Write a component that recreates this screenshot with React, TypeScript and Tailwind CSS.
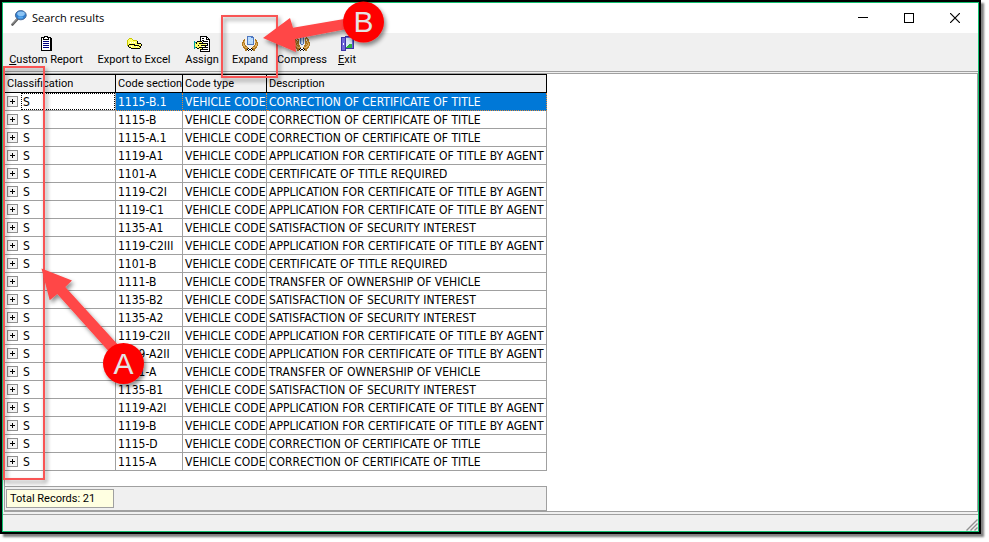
import { Fragment } from "react";
import type { ReactNode } from "react";

const ROWS = [
  { cls: "S", section: "1115-B.1", desc: "CORRECTION OF CERTIFICATE OF TITLE" },
  { cls: "S", section: "1115-B", desc: "CORRECTION OF CERTIFICATE OF TITLE" },
  { cls: "S", section: "1115-A.1", desc: "CORRECTION OF CERTIFICATE OF TITLE" },
  { cls: "S", section: "1119-A1", desc: "APPLICATION FOR CERTIFICATE OF TITLE BY AGENT" },
  { cls: "S", section: "1101-A", desc: "CERTIFICATE OF TITLE REQUIRED" },
  { cls: "S", section: "1119-C2I", desc: "APPLICATION FOR CERTIFICATE OF TITLE BY AGENT" },
  { cls: "S", section: "1119-C1", desc: "APPLICATION FOR CERTIFICATE OF TITLE BY AGENT" },
  { cls: "S", section: "1135-A1", desc: "SATISFACTION OF SECURITY INTEREST" },
  { cls: "S", section: "1119-C2III", desc: "APPLICATION FOR CERTIFICATE OF TITLE BY AGENT" },
  { cls: "S", section: "1101-B", desc: "CERTIFICATE OF TITLE REQUIRED" },
  { cls: "", section: "1111-B", desc: "TRANSFER OF OWNERSHIP OF VEHICLE" },
  { cls: "S", section: "1135-B2", desc: "SATISFACTION OF SECURITY INTEREST" },
  { cls: "S", section: "1135-A2", desc: "SATISFACTION OF SECURITY INTEREST" },
  { cls: "S", section: "1119-C2II", desc: "APPLICATION FOR CERTIFICATE OF TITLE BY AGENT" },
  { cls: "S", section: "1119-A2II", desc: "APPLICATION FOR CERTIFICATE OF TITLE BY AGENT" },
  { cls: "S", section: "1111-A", desc: "TRANSFER OF OWNERSHIP OF VEHICLE" },
  { cls: "S", section: "1135-B1", desc: "SATISFACTION OF SECURITY INTEREST" },
  { cls: "S", section: "1119-A2I", desc: "APPLICATION FOR CERTIFICATE OF TITLE BY AGENT" },
  { cls: "S", section: "1119-B", desc: "APPLICATION FOR CERTIFICATE OF TITLE BY AGENT" },
  { cls: "S", section: "1115-D", desc: "CORRECTION OF CERTIFICATE OF TITLE" },
  { cls: "S", section: "1115-A", desc: "CORRECTION OF CERTIFICATE OF TITLE" },
];

const COLORS: Record<string, string> = {
  k: "#000000",
  n: "#000080",
  w: "#ffffff",
  y: "#ffff66",
  o: "#c8c800",
  g: "#808080",
  t: "#00a0a0",
  b: "#b07820",
  l: "#e0b060",
  c: "#b8dcff",
  d: "#5078c0",
  p: "#3c34a8",
  v: "#7068d8",
  e: "#30b040",
  s: "#d8e8f8",
};

const CLIPBOARD = [
  "......kkkk......",
  "...kkkkwwkkkk...",
  "...kwkwwwwkwkk..",
  "...kwkkkkkkwkk..",
  "...kwwwwwwwwkk..",
  "...kwnnnnnnwkk..",
  "...kwwwwwwwwkk..",
  "...kwnnnnnnwkk..",
  "...kwwwwwwwwkk..",
  "...kwnnnnnnwkk..",
  "...kwwwwwwwwkk..",
  "...kwnnnnnnwkk..",
  "...kwwwwwwwwkk..",
  "...kwwwwwwwwkk..",
  "...kkkkkkkkkkk..",
  "................",
];

const FOLDER = [
  "................",
  "................",
  "...ooo..........",
  "..oyyyo.........",
  ".oyyyyyoooo.....",
  ".oyyyyyyyyyk....",
  ".oyywywywyyk....",
  ".oyyyyyyyyykkkk.",
  ".oykkkkkkyyyyyyk",
  ".okyyyyykkkkkyyk",
  "..kyywyyyywyykk.",
  "...kkyyyyyyyyyk.",
  ".....kkkkkkkkk..",
  "................",
  "................",
  "................",
];

const ASSIGN = [
  "......kkkkkkk...",
  "......kwwwwwkk..",
  "......kwkkwwkwk.",
  "......kwwwwwkkkk",
  "......kwkkwwwwwk",
  "t..kkkkkwkkkkkwk",
  "ttkyyyyykwwwwwwk",
  "tykyykkkkkkkkkwk",
  "tyyyyyyyyyyywkwk",
  "tyyykyykkkkkkkwk",
  "tyyyyyyywwykwwwk",
  "ttkyykkkkkkkkkwk",
  "t..kkyyykwwwwwwk",
  "......kkkkkkkkwk",
  "......kwwwwwwwwk",
  "......kkkkkkkkkk",
];

const EXPAND = [
  ".....dddddd.....",
  ".....dcccddd....",
  ".....dcccccd....",
  "..b..dcccccd.b..",
  ".bb..dcsccsd.bb.",
  ".bl..dcccccd.lb.",
  "bbl..dcccccd.lbb",
  "blb..dcccccd.blb",
  "blb..ddddddd.blb",
  "bllb........bllb",
  ".blbb......bblb.",
  ".bbllb....bllbb.",
  "..bbbbkwwkbbbb..",
  "...bbkwkkwkbb...",
  "...bb.k..k.bb...",
  "................",
];

const COMPRESS = [
  ".......ddd......",
  "..b...dccd..b...",
  "..bb..dcsd.bbb..",
  ".b.bb.dcsd.b.bb.",
  ".bb.b.dcsd.b.bb.",
  ".blbb.dcsd.bblb.",
  "bblbb.dcsd.bblbb",
  "blbbb.dcsd.bbblb",
  "blblb..dd..blblb",
  "bllbbb....bbbllb",
  ".bllbb....bbllb.",
  ".bblllb..blllbb.",
  "..bbbbkwwkbbbb..",
  "...bbkwkkwkbb...",
  "...bb.k..k.bb...",
  "................",
];

const EXIT = [
  "......ppppppppp.",
  "..pppppvvvvvvvp.",
  "..pvvvpssssssvp.",
  "..pvvvpssssssvp.",
  "..pvvvpssssssvp.",
  "..pvvvpssssssvp.",
  "..pvvvpssssssvp.",
  "..pvwvpssssssvp.",
  "..pvwvpssseeevp.",
  "..pvvvpsseeeevp.",
  "..pvvvpseeeeevp.",
  "..pvvvpeeeeeevp.",
  "..pvvvppppppppp.",
  "..pvvvp.........",
  "..ppppp.........",
  "................",
];

function PixelIcon({ map }: { map: string[] }) {
  return (
    <svg width="16" height="16" viewBox="0 0 16 16" shapeRendering="crispEdges" aria-hidden="true">
      {map.map((line, y) => (
        <Fragment key={y}>
          {line.split("").map((c, x) =>
            c === "." ? null : <rect key={x} x={x} y={y} width="1" height="1" fill={COLORS[c]} />
          )}
        </Fragment>
      ))}
    </svg>
  );
}

function SearchIcon() {
  return (
    <svg width="16" height="16" viewBox="0 0 16 16" aria-hidden="true">
      <path d="M1.5 14.5 L6.5 9" stroke="#5a5a5a" strokeWidth="2.6" strokeLinecap="round" />
      <path d="M1.5 14 L6 9.2" stroke="#a8a8a8" strokeWidth="0.9" strokeLinecap="round" />
      <ellipse cx="9.8" cy="5.2" rx="5.4" ry="4.6" fill="#2f7fd0" stroke="#4a6a98" strokeWidth="1" />
      <ellipse cx="10" cy="3.8" rx="3.8" ry="2.3" fill="#8cc4f4" />
      <ellipse cx="9.6" cy="7.4" rx="2.6" ry="1.2" fill="#58a8ec" />
    </svg>
  );
}

function ToolButton({ className, map, children }: { className: string; map: string[]; children: ReactNode }) {
  return (
    <button type="button" className={`flex shrink-0 flex-col items-center whitespace-nowrap ${className}`}>
      <PixelIcon map={map} />
      <span className="leading-4">{children}</span>
    </button>
  );
}

function TitleBar() {
  return (
    <header className="flex h-[30px] items-center bg-white pl-2">
      <SearchIcon />
      <h1 className="grow pl-[5px] font-['Open_Sans',sans-serif] text-[11px]">Search results</h1>
      <button type="button" aria-label="Minimize" className="flex h-full w-[46px] items-center justify-center">
        <svg width="10" height="10" shapeRendering="crispEdges">
          <path d="M0 4.5H10" stroke="#000" />
        </svg>
      </button>
      <button type="button" aria-label="Maximize" className="flex h-full w-[46px] items-center justify-center">
        <svg width="10" height="10" shapeRendering="crispEdges">
          <rect x="0.5" y="0.5" width="9" height="9" fill="none" stroke="#000" />
        </svg>
      </button>
      <button type="button" aria-label="Close" className="flex h-full w-[46px] items-center justify-center">
        <svg width="10" height="10">
          <path d="M0 0L10 10M10 0L0 10" stroke="#000" strokeWidth="1.2" />
        </svg>
      </button>
    </header>
  );
}

function Toolbar() {
  return (
    <nav className="flex h-[39px] items-start border-b border-[#a0a0a0] bg-[#f0f0f0] pt-[3px] pl-px">
      <ToolButton className="w-[84px]" map={CLIPBOARD}>
        <u>C</u>ustom Report
      </ToolButton>
      <ToolButton className="w-[92px]" map={FOLDER}>Export to Excel</ToolButton>
      <ToolButton className="w-[44px]" map={ASSIGN}>Assign</ToolButton>
      <ToolButton className="w-[52px]" map={EXPAND}>Expand</ToolButton>
      <ToolButton className="w-[52px]" map={COMPRESS}>Compress</ToolButton>
      <ToolButton className="w-[38px]" map={EXIT}>
        <u>E</u>xit
      </ToolButton>
    </nav>
  );
}

function ResultsTable() {
  const head = "h-[19px] border-y border-r border-black bg-[#f0f0f0] p-0 pl-0.5 text-left font-normal";
  const cell = "h-[18px] border-r border-b border-[#a0a0a0] p-0 pl-0.5";
  return (
    <table className="w-[542px] table-fixed border-separate border-spacing-0 leading-4 whitespace-nowrap">
      <thead>
        <tr>
          <th className={`w-[111px] ${head}`}>Classification</th>
          <th className={`w-[67px] ${head}`}>Code section</th>
          <th className={`w-[84px] ${head}`}>Code type</th>
          <th className={head}>Description</th>
        </tr>
      </thead>
      <tbody className="font-['DejaVu_Sans_Condensed','Roboto',sans-serif] text-[12px] leading-4">
        {ROWS.map((row, i) => (
          <tr key={row.section}>
            <td className={cell}>
              <div className="flex h-[17px] items-center gap-[3px]">
                <button
                  type="button"
                  aria-label="Expand row"
                  className="flex size-[11px] items-center justify-center border border-[#909090] bg-[#f4f4f4]"
                >
                  <svg width="5" height="5" shapeRendering="crispEdges">
                    <path d="M0 2.5H5M2.5 0V5" stroke="#000" />
                  </svg>
                </button>
                <span
                  className={
                    i === 0
                      ? "flex h-[17px] grow items-center border border-dotted border-black pl-px"
                      : "grow pl-0.5"
                  }
                >
                  {row.cls}
                </span>
              </div>
            </td>
            {[row.section, "VEHICLE CODE", row.desc].map((text, j) => (
              <td
                key={j}
                className={
                  i === 0
                    ? "h-[18px] border-r border-b border-dotted border-[#e08a3c] bg-[#0078d7] p-0 pl-0.5 text-white"
                    : cell
                }
              >
                {text}
              </td>
            ))}
          </tr>
        ))}
      </tbody>
    </table>
  );
}

function StatusBar() {
  return (
    <footer className="mt-0.5 flex h-[17px] items-end justify-end border-t border-[#a0a0a0] bg-[#f0f0f0]">
      <svg width="12" height="12" viewBox="0 0 12 12" aria-hidden="true">
        <path d="M0.5 11.5L11.5 0.5M4.5 11.5L11.5 4.5M8.5 11.5L11.5 8.5" stroke="#909090" strokeWidth="1.4" />
      </svg>
    </footer>
  );
}

// Callouts drawn over the window: framed areas, arrows and lettered markers
function Callouts() {
  return (
    <svg
      className="pointer-events-none absolute top-0 left-0 font-['Liberation_Sans',sans-serif] text-[30px]"
      width="400"
      height="500"
      viewBox="0 0 400 500"
      aria-hidden="true"
    >
      <defs>
        <filter id="shadow" x="-20%" y="-20%" width="150%" height="150%">
          <feDropShadow dx="2" dy="3" stdDeviation="2" floodOpacity="0.45" />
        </filter>
      </defs>
      <g filter="url(#shadow)">
        <rect x="4" y="67" width="40" height="412" fill="none" stroke="#f95555" strokeWidth="2" />
        <rect x="222" y="16" width="55" height="61" fill="none" stroke="#f95555" strokeWidth="2" />
      </g>
      <g filter="url(#shadow)" fill="#ff4646">
        <path d="M41.5 268.5L72 280.5L65.3 287L120 347L112 355L57.3 294L49.7 300.3Z" />
        <path d="M263 38L290 18L293 27.7L350 18L352 28L295 39L296 52Z" />
      </g>
      <g filter="url(#shadow)" fill="#ff0000">
        <circle cx="123.5" cy="363.5" r="20.5" />
        <circle cx="363.5" cy="22" r="20.5" />
      </g>
      <g fill="#e4e4e4" textAnchor="middle">
        <text x="123.5" y="374">A</text>
        <text x="363.5" y="32">B</text>
      </g>
    </svg>
  );
}

export default function App() {
  return (
    <div className="relative min-h-screen bg-white pr-2 pb-2 font-['Roboto',sans-serif] text-[11px] text-black">
      <div className="border-2 border-black shadow-[3px_3px_2px_#808080]">
        <div className="border border-[#10c070] bg-[#f0f0f0]">
          <TitleBar />
          <Toolbar />
          <main className="mt-px ml-px border border-[#a0a0a0] bg-white">
            <ResultsTable />
            <div className="mt-[15px] flex h-[25px] w-[542px] border-y border-r border-[#a0a0a0] bg-[#f0f0f0] pt-0.5 pl-px">
              <output className="h-[19px] w-[108px] border border-[#a0a0a0] bg-[#ffffe1] pl-[3px] leading-[17px]">
                Total Records: 21
              </output>
            </div>
          </main>
          <StatusBar />
        </div>
      </div>
      <Callouts />
    </div>
  );
}
